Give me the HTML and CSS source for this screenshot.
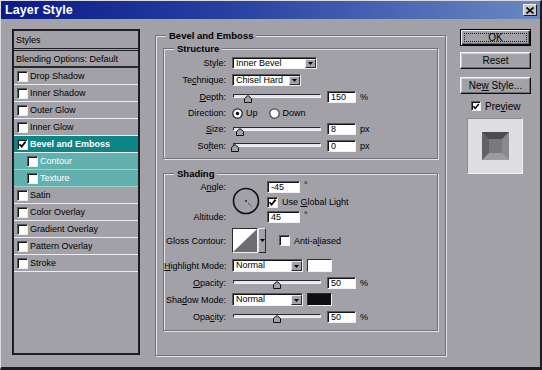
FILE: index.html
```
<!DOCTYPE html>
<html>
<head>
<meta charset="utf-8">
<title>Layer Style</title>
<link rel="stylesheet" href="styles.css">
</head>
<body>
<div class="window">
  <div class="titlebar">
    <span class="title">Layer Style</span>
    <span class="close"><svg width="8" height="7" viewBox="0 0 8 7"><path d="M0.5 0.5 L7.5 6.5 M7.5 0.5 L0.5 6.5" stroke="#000" stroke-width="1.6"/></svg></span>
  </div>
  <div class="content">
    <div class="list">
      <div class="lrow head">Styles</div>
      <div class="lrow blend">Blending Options: Default</div>
      <div class="lrow"><span class="cb"></span>Drop Shadow</div>
      <div class="lrow"><span class="cb"></span>Inner Shadow</div>
      <div class="lrow"><span class="cb"></span>Outer Glow</div>
      <div class="lrow"><span class="cb"></span>Inner Glow</div>
      <div class="lrow sel"><span class="cb"><svg width="9" height="9" viewBox="0 0 9 9"><path d="M1.5 4.2 L3.6 6.6 L7.6 1.6" stroke="#000" stroke-width="1.7" fill="none"/></svg></span>Bevel and Emboss</div>
      <div class="lrow sub"><span class="cb"></span>Contour</div>
      <div class="lrow sub"><span class="cb"></span>Texture</div>
      <div class="lrow"><span class="cb"></span>Satin</div>
      <div class="lrow"><span class="cb"></span>Color Overlay</div>
      <div class="lrow"><span class="cb"></span>Gradient Overlay</div>
      <div class="lrow"><span class="cb"></span>Pattern Overlay</div>
      <div class="lrow"><span class="cb"></span>Stroke</div>
    </div>

    <div class="group outer">
      <div class="legend">Bevel and Emboss</div>

      <div class="group structure">
        <div class="legend">Structure</div>
        <div class="frow">
          <span class="lbl">Style:</span>
          <div class="select w85"><span class="val">Inner Bevel</span><span class="drop"><svg width="5" height="3" viewBox="0 0 5 3"><polygon points="0,0 5,0 2.5,3" fill="#000"/></svg></span></div>
        </div>
        <div class="frow">
          <span class="lbl">Te<u>c</u>hnique:</span>
          <div class="select w69"><span class="val">Chisel Hard</span><span class="drop"><svg width="5" height="3" viewBox="0 0 5 3"><polygon points="0,0 5,0 2.5,3" fill="#000"/></svg></span></div>
        </div>
        <div class="frow">
          <span class="lbl"><u>D</u>epth:</span>
          <div class="slider"><div class="track"></div><svg class="thumb" style="left:11px" width="8" height="8" viewBox="0 0 8 8"><polygon points="0.5,3.5 4,0.5 7.5,3.5 7.5,7.5 0.5,7.5" fill="#a2a1a7" stroke="#111"/></svg></div>
          <span class="input">150</span><span class="unit">%</span>
        </div>
        <div class="frow r16">
          <span class="lbl">Direction:</span>
          <svg class="radio" width="11" height="11" viewBox="0 0 11 11"><circle cx="5.5" cy="5.5" r="4.7" fill="#fff" stroke="#222" stroke-width="1.2"/><circle cx="5.5" cy="5.5" r="1.7" fill="#000"/></svg>
          <span class="rtext">Up</span>
          <svg class="radio r-down" width="11" height="11" viewBox="0 0 11 11"><circle cx="5.5" cy="5.5" r="4.7" fill="#fff" stroke="#444" stroke-width="1.2"/></svg>
          <span class="rtext">Down</span>
        </div>
        <div class="frow r16">
          <span class="lbl"><u>S</u>ize:</span>
          <div class="slider"><div class="track"></div><svg class="thumb" style="left:3px" width="8" height="8" viewBox="0 0 8 8"><polygon points="0.5,3.5 4,0.5 7.5,3.5 7.5,7.5 0.5,7.5" fill="#a2a1a7" stroke="#111"/></svg></div>
          <span class="input">8</span><span class="unit">px</span>
        </div>
        <div class="frow">
          <span class="lbl">So<u>f</u>ten:</span>
          <div class="slider"><div class="track"></div><svg class="thumb" style="left:-2px" width="8" height="8" viewBox="0 0 8 8"><polygon points="0.5,3.5 4,0.5 7.5,3.5 7.5,7.5 0.5,7.5" fill="#a2a1a7" stroke="#111"/></svg></div>
          <span class="input">0</span><span class="unit">px</span>
        </div>
      </div>

      <div class="group shading">
        <div class="legend">Shading</div>
        <div class="anglegrid">
          <span class="lbl g-angle">A<u>n</u>gle:</span>
          <svg class="dial" width="28" height="28" viewBox="0 0 28 28"><circle cx="14" cy="14" r="12.5" fill="none" stroke="#111" stroke-width="1.6"/><rect x="13.2" y="13.2" width="1.6" height="1.6" fill="#111"/><path d="M16 16 L19.5 19.5" stroke="#222" stroke-width="1" stroke-dasharray="1 1"/></svg>
          <div class="fld g-in1"><span class="input w33">-45</span><span class="unit deg">°</span></div>
          <div class="fld g-cb"><span class="cb"><svg width="9" height="9" viewBox="0 0 9 9"><path d="M1.5 4.2 L3.6 6.6 L7.6 1.6" stroke="#000" stroke-width="1.7" fill="none"/></svg></span><span class="cbtext">Use <u>G</u>lobal Light</span></div>
          <span class="lbl g-alt">Altitude:</span>
          <div class="fld g-in2"><span class="input w33">45</span><span class="unit deg">°</span></div>
        </div>
        <div class="frow gloss">
          <span class="lbl">Gloss Contour:</span>
          <div class="contour"><svg width="24" height="23" viewBox="0 0 24 23"><rect width="24" height="23" fill="#fff"/><polygon points="0,23 24,0 24,23" fill="#6e6d74"/></svg></div>
          <span class="cdrop"><svg width="5" height="3" viewBox="0 0 5 3"><polygon points="0,0 5,0 2.5,3" fill="#000"/></svg></span>
          <span class="cb aa"></span><span class="cbtext">Anti-a<u>l</u>iased</span>
        </div>
        <div class="frow mode">
          <span class="lbl"><u>H</u>ighlight Mode:</span>
          <div class="select w71 h13"><span class="val">Normal</span><span class="drop"><svg width="5" height="3" viewBox="0 0 5 3"><polygon points="0,0 5,0 2.5,3" fill="#000"/></svg></span></div>
          <span class="swatch white"></span>
        </div>
        <div class="frow">
          <span class="lbl"><u>O</u>pacity:</span>
          <div class="slider"><div class="track"></div><svg class="thumb" style="left:40px" width="8" height="8" viewBox="0 0 8 8"><polygon points="0.5,3.5 4,0.5 7.5,3.5 7.5,7.5 0.5,7.5" fill="#a2a1a7" stroke="#111"/></svg></div>
          <span class="input">50</span><span class="unit">%</span>
        </div>
        <div class="frow">
          <span class="lbl">Sha<u>d</u>ow Mode:</span>
          <div class="select w71 h13"><span class="val">Normal</span><span class="drop"><svg width="5" height="3" viewBox="0 0 5 3"><polygon points="0,0 5,0 2.5,3" fill="#000"/></svg></span></div>
          <span class="swatch black"></span>
        </div>
        <div class="frow">
          <span class="lbl">Opa<u>c</u>ity:</span>
          <div class="slider"><div class="track"></div><svg class="thumb" style="left:40px" width="8" height="8" viewBox="0 0 8 8"><polygon points="0.5,3.5 4,0.5 7.5,3.5 7.5,7.5 0.5,7.5" fill="#a2a1a7" stroke="#111"/></svg></div>
          <span class="input">50</span><span class="unit">%</span>
        </div>
      </div>
    </div>

    <div class="side">
      <div class="btn default"><span class="focus">OK</span></div>
      <div class="btn reset"><span>Reset</span></div>
      <div class="btn newstyle"><span>Ne<u>w</u> Style...</span></div>
      <div class="prevrow"><span class="cb"><svg width="9" height="9" viewBox="0 0 9 9"><path d="M1.5 4.2 L3.6 6.6 L7.6 1.6" stroke="#000" stroke-width="1.7" fill="none"/></svg></span><span class="prevtext">Pre<u>v</u>iew</span></div>
      <div class="preview"><div class="bevel"></div></div>
    </div>
  </div>
</div>
</body>
</html>
```

FILE: styles.css
```
* { box-sizing: border-box; }
html, body { margin: 0; padding: 0; }
body {
  width: 542px;
  height: 370px;
  overflow: hidden;
  background: #a2a1a7;
  font-family: "Liberation Sans", Arial, sans-serif;
  font-size: 9px;
  color: #000;
}
u { text-decoration: underline; text-underline-offset: 1px; }

.window {
  width: 542px;
  height: 370px;
  background: #a2a1a7;
  border-style: solid;
  border-width: 1px 2px 3px 1px;
  border-color: #dcdce0 #1c1c1e #1c1c1e #dcdce0;
  display: flex;
  flex-direction: column;
}

.titlebar {
  height: 18px;
  flex: none;
  display: flex;
  align-items: center;
  justify-content: space-between;
  padding: 0 3px 0 4px;
  background: linear-gradient(to right, #0a1a86 0%, #2a44a2 45%, #6a88c2 100%);
}
.title {
  color: #fff;
  font-weight: bold;
  font-size: 12.5px;
  letter-spacing: 0.1px;
}
.close {
  width: 14px;
  height: 12px;
  display: flex;
  align-items: center;
  justify-content: center;
  background: #c8c8cc;
  border: 1px solid;
  border-color: #f4f4f4 #1a1a1a #1a1a1a #f4f4f4;
}

.content {
  flex: 1;
  display: flex;
  align-items: flex-start;
  padding: 10px 0 0 11px;
}

/* style list */
.list {
  width: 128px;
  height: 326px;
  flex: none;
  border: 2px solid #1e1e22;
  display: flex;
  flex-direction: column;
}
.lrow {
  height: 17px;
  flex: none;
  display: flex;
  align-items: center;
  padding-left: 3px;
  border-bottom: 1px solid #ececf0;
  white-space: nowrap;
}
.lrow.head {
  height: 20px;
  padding-left: 2px;
  border-bottom: 3px double #1e1e22;
}
.lrow.blend {
  height: 17px;
  padding-left: 2px;
  border-bottom: 2px solid #2a2a2e;
}
.lrow.sel {
  background: #0d8585;
  color: #fff;
  font-weight: bold;
}
.lrow.sub {
  background: #62b1af;
  color: #fff;
  padding-left: 13px;
  border-bottom-color: #9ccfcd;
}
.lrow .cb { margin-right: 2px; }

.cb {
  width: 11px;
  height: 11px;
  flex: none;
  display: inline-flex;
  align-items: center;
  justify-content: center;
  background: #fff;
  border: 1px solid;
  border-color: #58585c #ececec #ececec #58585c;
  box-shadow: inset 1px 1px 0 #151515;
}

/* group boxes */
.group {
  border: 1px solid #737278;
  box-shadow: 1px 1px 0 #e2e2e6, inset 1px 1px 0 #e2e2e6;
  display: flex;
  flex-direction: column;
  flex: none;
}
.legend {
  align-self: flex-start;
  margin: -6px 0 0 10px;
  padding: 0 3px;
  height: 11px;
  line-height: 11px;
  background: #a2a1a7;
  font-weight: bold;
  font-size: 9.5px;
}
.outer {
  width: 291px;
  height: 321px;
  margin: 6px 0 0 15px;
}
.structure {
  height: 111px;
  margin: 7px 7px 0 7px;
}
.shading {
  height: 158px;
  margin: 14px 7px 0 7px;
}

.frow {
  height: 17px;
  flex: none;
  display: flex;
  align-items: center;
}
.frow.r16 { height: 16px; }
.lbl {
  width: 68px;
  flex: none;
  padding-right: 6px;
  text-align: right;
  white-space: nowrap;
}

.select {
  height: 12px;
  display: flex;
  background: #fff;
  border: 1px solid;
  border-color: #58585c #f2f2f2 #f2f2f2 #58585c;
  box-shadow: inset 1px 1px 0 #151515;
  flex: none;
}
.select.h13 { height: 13px; }
.w85 { width: 85px; }
.w69 { width: 69px; }
.w71 { width: 71px; }
.val {
  flex: 1;
  padding-left: 3px;
  line-height: 10px;
  white-space: nowrap;
}
.h13 .val { line-height: 11px; }
.drop {
  width: 11px;
  margin: 1px 0 0 0;
  display: flex;
  align-items: center;
  justify-content: center;
  background: #a2a1a7;
  border: 1px solid;
  border-color: #e8e8ea #2a2a2c #2a2a2c #e8e8ea;
}

.slider {
  width: 88px;
  height: 11px;
  margin-left: 1px;
  flex: none;
  position: relative;
}
.track {
  margin-top: 3px;
  height: 4px;
  background: #e6e6ea;
  border: 1px solid;
  border-color: #2a2a2e #f4f4f6 #f4f4f6 #2a2a2e;
  border-radius: 1px;
}
.thumb {
  position: absolute;
  top: 4px;
}

.input {
  width: 29px;
  height: 12px;
  flex: none;
  margin-left: 6px;
  padding-left: 3px;
  line-height: 10px;
  background: #fff;
  border: 1px solid;
  border-color: #58585c #f2f2f2 #f2f2f2 #58585c;
  box-shadow: inset 1px 1px 0 #151515;
}
.input.w33 { width: 33px; margin-left: 0; }
.unit { margin-left: 4px; }
.unit.deg { align-self: flex-start; font-size: 9px; line-height: 8px; }

.radio { flex: none; }
.rtext { margin-left: 3px; }
.r-down { margin-left: 11px; }

/* angle area */
.anglegrid {
  margin-top: 2px;
  display: grid;
  grid-template-columns: 68px 35px auto;
  grid-template-rows: 12px 12px 11px;
  row-gap: 3px;
  align-items: center;
}
.anglegrid .lbl { width: auto; }
.g-angle { grid-column: 1; grid-row: 1; }
.dial { grid-column: 2; grid-row: 1 / 4; align-self: start; margin-top: 6px; }
.g-in1 { grid-column: 3; grid-row: 1; }
.g-cb { grid-column: 3; grid-row: 2; }
.g-alt { grid-column: 1; grid-row: 3; }
.g-in2 { grid-column: 3; grid-row: 3; }
.fld { display: flex; align-items: center; height: 100%; }
.g-in1 .input, .g-in2 .input { height: 12px; }
.cbtext { margin-left: 4px; white-space: nowrap; }

.gloss {
  height: 25px;
  margin-top: 6px;
}
.contour {
  width: 26px;
  height: 25px;
  flex: none;
  border: 1px solid;
  border-color: #2a2a2e #f2f2f2 #f2f2f2 #2a2a2e;
  display: flex;
}
.cdrop {
  width: 8px;
  height: 25px;
  flex: none;
  display: flex;
  align-items: center;
  justify-content: center;
  background: #a2a1a7;
  border: 1px solid;
  border-color: #e8e8ea #2a2a2c #2a2a2c #e8e8ea;
}
.cb.aa { margin-left: 13px; }

.mode { margin-top: 4px; }
.swatch {
  width: 25px;
  height: 13px;
  flex: none;
  margin-left: 4px;
  border: 1px solid;
  border-color: #2a2a2e #f2f2f2 #f2f2f2 #2a2a2e;
}
.swatch.white { background: #fff; }
.swatch.black { background: #0e0d10; }

/* right column */
.side {
  width: 71px;
  flex: none;
  margin-left: 14px;
  display: flex;
  flex-direction: column;
}
.btn {
  width: 71px;
  height: 17px;
  flex: none;
  display: flex;
  align-items: center;
  justify-content: center;
  font-size: 10px;
  background: #a2a1a7;
  border: 1px solid;
  border-color: #f2f2f4 #101012 #101012 #f2f2f4;
  box-shadow: inset -1px -1px 0 #6c6b72, inset 1px 1px 0 #cfcfd4;
  white-space: nowrap;
}
.btn.default {
  border: 1px solid #000;
  padding: 3px;
  box-shadow: inset 1px 1px 0 #f2f2f4, inset -1px -1px 0 #101012, inset -2px -2px 0 #6c6b72;
}
.focus {
  flex: 1;
  align-self: stretch;
  display: flex;
  align-items: center;
  justify-content: center;
  border: 1px dotted #202022;
  line-height: 8px;
}
.btn.reset { margin-top: 6px; }
.btn.newstyle { margin-top: 8px; }
.prevrow {
  height: 12px;
  margin-top: 6px;
  padding-left: 11px;
  display: flex;
  align-items: center;
}
.prevrow .cb { width: 10px; height: 10px; }
.prevtext { margin-left: 4px; font-size: 10px; }
.preview {
  width: 56px;
  height: 56px;
  margin: 6px 0 0 7px;
  background: #dedee0;
  border: 1px solid;
  border-color: #8c8c90 #f2f2f4 #f2f2f4 #8c8c90;
  display: flex;
  align-items: center;
  justify-content: center;
}
.bevel {
  width: 27px;
  height: 28px;
  border-style: solid;
  border-width: 7px;
  border-color: #4c4c4e #8a8a8c #9c9c9e #626264;
  background: #7a7a7c;
}
```
